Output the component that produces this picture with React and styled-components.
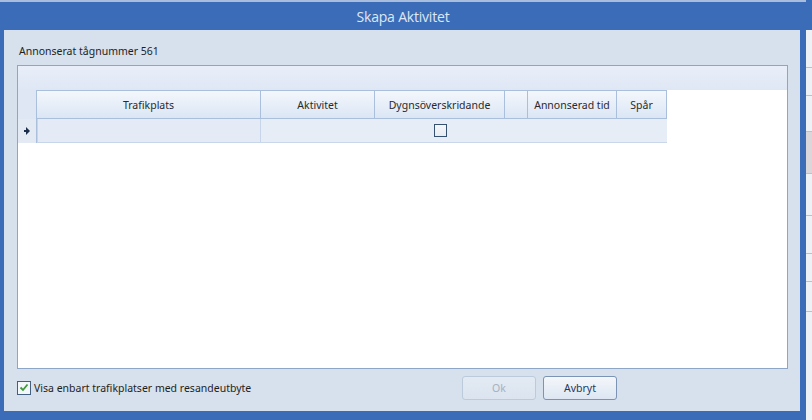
import React from "react";
import styled, { createGlobalStyle } from "styled-components";

const GlobalStyle = createGlobalStyle`
  html, body {
    margin: 0;
    padding: 0;
    background: #e9edf2;
  }
  body {
    font-family: "Noto Sans", "Open Sans", "Liberation Sans", sans-serif;
    font-size: 10.5px;
    color: #1e1e1e;
  }
`;

const Screen = styled.div`
  width: 812px;
  height: 420px;
  display: flex;
  overflow: hidden;
`;

const Window = styled.div`
  width: 806px;
  height: 420px;
  display: flex;
  flex-direction: column;
  background: #3b6cb8;
  border-top: 2px solid #a9bedd;
  box-sizing: border-box;
`;

const TitleBar = styled.div`
  height: 30px;
  display: flex;
  align-items: center;
  justify-content: center;
  color: #dfe7f4;
  font-family: "Open Sans", "Noto Sans", sans-serif;
  font-size: 14px;
  letter-spacing: -0.2px;
`;

const Body = styled.div`
  flex: 1;
  margin: 0 6px 9px 4px;
  background: #d6e1ed;
  display: flex;
  flex-direction: column;
  padding: 14px 12px 0 13px;
`;

const NumberLabel = styled.div`
  height: 21px;
  padding-left: 2px;
  font-size: 10.5px;
  line-height: 14px;
`;

const GridBox = styled.div`
  height: 302px;
  border: 1px solid #8ea6c6;
  background: #ffffff;
  display: flex;
  flex-direction: column;
`;

const GroupPanel = styled.div`
  height: 24px;
  background: linear-gradient(#e9eff9, #dfe7f5);
`;

const GridRow = styled.div`
  display: flex;
  width: 649px;
  height: ${(p) => p.h}px;
`;

const Indicator = styled.div`
  width: 19px;
  flex-shrink: 0;
  display: flex;
  align-items: center;
  justify-content: center;
  background: ${(p) => (p.head ? "#dfe7f4" : "#e4eaf4")};
  border-right: 1px solid #a9bfdc;
  box-sizing: border-box;
`;

const HeadCell = styled.div`
  width: ${(p) => p.w}px;
  flex-shrink: 0;
  box-sizing: border-box;
  display: flex;
  align-items: center;
  justify-content: center;
  background: linear-gradient(#f4f7fc, #dbe6f5);
  border-right: 1px solid #a9bfdc;
  border-top: 1px solid #a9bfdc;
  border-bottom: 1px solid #a9bfdc;
  color: #2a2a2a;
  font-size: 10.5px;
`;

const DataCell = styled.div`
  width: ${(p) => p.w}px;
  flex-shrink: 0;
  box-sizing: border-box;
  display: flex;
  align-items: center;
  justify-content: center;
  background: #e7edf7;
  border-bottom: 1px solid #cad7ea;
  ${(p) =>
    p.focused &&
    `
    background: #e4ebf6;
    border: 1px solid #c7d5ea;
    border-top: none;
  `}
`;

const CellCheck = styled.span`
  width: 11px;
  height: 11px;
  border: 1px solid #36506f;
  background: linear-gradient(#f4f6fa, #e8ecf3);
`;

const Footer = styled.div`
  height: 42px;
  display: flex;
  align-items: center;
  padding-bottom: 5px;
  box-sizing: border-box;
`;

const CheckLabel = styled.label`
  display: flex;
  align-items: center;
  gap: 3px;
  width: 445px;
  font-size: 10.5px;
  color: #1e1e1e;
`;

const CheckBox = styled.span`
  width: 12px;
  height: 12px;
  border: 1px solid #44607f;
  background: #f3f6fa;
  display: flex;
  align-items: center;
  justify-content: center;
`;

const Buttons = styled.div`
  display: flex;
  gap: 7px;
`;

const Button = styled.button`
  width: 74px;
  height: 24px;
  border-radius: 3px;
  font-family: inherit;
  font-size: 10.5px;
  padding: 0;
  border: 1px solid ${(p) => (p.disabled ? "#bccbdc" : "#7b93b5")};
  color: ${(p) => (p.disabled ? "#a6b2c0" : "#1f3760")};
  background: ${(p) =>
    p.disabled
      ? "linear-gradient(#e3eaf3, #dbe4ef)"
      : "linear-gradient(#f4f7fb, #dde6f2)"};
`;

const SideStrip = styled.div`
  width: 6px;
  height: 420px;
  background: #eef1f5;
  display: flex;
  flex-direction: column;
`;

const StripBand = styled.div`
  height: ${(p) => p.h}px;
  background: ${(p) => p.bg || "#eef1f5"};
  border-bottom: ${(p) => (p.line ? "1px solid #b9c2cc" : "none")};
  box-sizing: border-box;
`;

const columns = [
  { key: "trafikplats", label: "Trafikplats", w: 224 },
  { key: "aktivitet", label: "Aktivitet", w: 114 },
  { key: "dygn", label: "Dygnsöverskridande", w: 130 },
  { key: "blank", label: "", w: 23 },
  { key: "tid", label: "Annonserad tid", w: 89 },
  { key: "spar", label: "Spår", w: 50 },
];

const RowArrow = () => (
  <svg width="7" height="8" viewBox="0 0 7 8">
    <path d="M2 0 L6 4 L2 8 Z M0 3 H3 V5 H0 Z" fill="#1d2f4d" />
  </svg>
);

const CheckMark = () => (
  <svg width="10" height="9" viewBox="0 0 10 9">
    <path
      d="M1.5 4.5 L4 7 L8.5 1.5"
      fill="none"
      stroke="#3f9a3a"
      strokeWidth="1.8"
    />
  </svg>
);

export default function App() {
  return (
    <>
      <GlobalStyle />
      <Screen>
        <Window>
          <TitleBar>Skapa Aktivitet</TitleBar>
          <Body>
            <NumberLabel>Annonserat tågnummer 561</NumberLabel>
            <GridBox>
              <GroupPanel />
              <GridRow h={29}>
                <Indicator head />
                {columns.map((c) => (
                  <HeadCell key={c.key} w={c.w}>
                    {c.label}
                  </HeadCell>
                ))}
              </GridRow>
              <GridRow h={24}>
                <Indicator>
                  <RowArrow />
                </Indicator>
                {columns.map((c, i) => (
                  <DataCell key={c.key} w={c.w} focused={i === 0}>
                    {c.key === "dygn" && <CellCheck />}
                  </DataCell>
                ))}
              </GridRow>
            </GridBox>
            <Footer>
              <CheckLabel>
                <CheckBox>
                  <CheckMark />
                </CheckBox>
                Visa enbart trafikplatser med resandeutbyte
              </CheckLabel>
              <Buttons>
                <Button disabled>Ok</Button>
                <Button>Avbryt</Button>
              </Buttons>
            </Footer>
          </Body>
        </Window>
        <SideStrip>
          <StripBand h={30} bg="#3b6cb8" />
          <StripBand h={38} line />
          <StripBand h={28} line />
          <StripBand h={36} line />
          <StripBand h={42} bg="#dad6da" line />
          <StripBand h={42} line />
          <StripBand h={38} line />
          <StripBand h={28} line />
          <StripBand h={30} line />
        </SideStrip>
      </Screen>
    </>
  );
}
